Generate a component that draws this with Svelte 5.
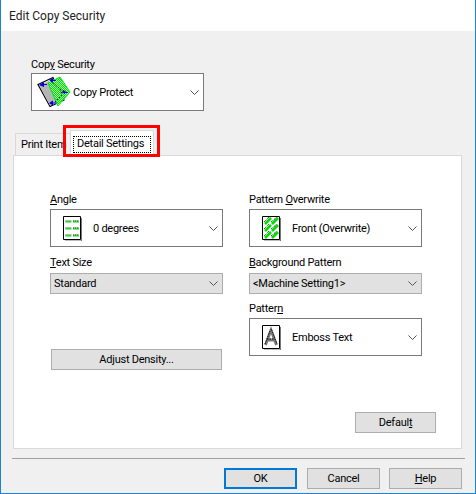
<script>
  const buttons = [
    { label: 'OK', cls: 'btn primary' },
    { label: 'Cancel', cls: 'btn' }
  ];
</script>

{#snippet chev()}
  <svg class="chev" width="9" height="5" viewBox="0 0 9 5"><path d="M.5.5l4 4 4-4" fill="none" stroke="#555"/></svg>
{/snippet}

<div class="window">
  <header class="title">Edit Copy Security</header>
  <main class="body">
    <section class="security">
      <div class="label">Cop<u>y</u> Security</div>
      <div class="combo copy">
        <svg class="ico copyico" width="36" height="34" viewBox="0 0 36 34">
          <defs>
            <pattern id="mesh" width="2" height="2" patternUnits="userSpaceOnUse">
              <rect width="2" height="2" fill="#a8f5a8"/>
              <rect width="1" height="1" fill="#00e600"/>
              <rect x="1" y="1" width="1" height="1" fill="#00e600"/>
            </pattern>
          </defs>
          <path d="M2 9.500 L17 2.500 L28 25 L14 31.500 Z" fill="#fff" stroke="#000" stroke-width="1.200"/>
          <path d="M3 10 L13 6 L21 28 L14 30.500 Z" fill="#b5b5b5"/>
          <path d="M12 8 L24 2 L34 17 L22 31 Z" fill="url(#mesh)" stroke="#00e020" stroke-width="1"/>
          <path d="M15 6 L24 14 L30 17 M24 14 L26 20 L19 27" stroke="#111" stroke-width="1" fill="none" stroke-dasharray="1.500 1.500"/>
          <path d="M3 10 L8 7 L8 12 Z M13 5 L17 3 L17 8 Z M13 28 L17 25.500 L17 30.500 Z M25 17 L29 15.500 L29 19 Z" fill="#0000e0"/>
          <path d="M8 9.500h3M17 5.500h3M17 28h3M29 17.500h3" stroke="#0000e0"/>
        </svg>
        <span class="val first-val">Copy Protect</span>
        {@render chev()}
      </div>
    </section>

    <nav class="tabs">
      <div class="tab">Print Item</div>
      <div class="tab active"><span class="focus">Detail Settings</span></div>
      <div class="highlight"></div>
    </nav>

    <section class="panel">
      <div class="grid">
        <div class="col">
          <div class="label first"><u>A</u>ngle</div>
          <div class="combo">
            <svg class="ico" width="19" height="25" viewBox="0 0 19 25">
              <path d="M.5.500h17v23h-17z" fill="#fff" stroke="#000"/>
              <path d="M18.500 2v23H2" fill="none" stroke="#777"/>
              <path d="M2.500 6h6M10 6h6M2.500 13h6M10 13h6M2.500 20h6M10 20h6" stroke="#00e000" stroke-width="1"/>
              <path d="M2.500 5h6M10 5h6M2.500 12h6M10 12h6M2.500 19h6M10 19h6" stroke="#111" stroke-width="1" stroke-dasharray="1 1"/>
              <path d="M3.500 5h6M11 5h5M3.500 12h6M11 12h5M3.500 19h6M11 19h5" stroke="#00e000" stroke-width="1" stroke-dasharray="1 1"/>
            </svg>
            <span class="val">0 degrees</span>
            {@render chev()}
          </div>
          <div class="label next"><u>T</u>ext Size</div>
          <div class="select">
            <span>Standard</span>
            {@render chev()}
          </div>
          <button class="btn adjust">Ad<u>j</u>ust Density...</button>
        </div>
        <div class="col">
          <div class="label first">Pattern <u>O</u>verwrite</div>
          <div class="combo">
            <svg class="ico" width="19" height="25" viewBox="0 0 19 25">
              <path d="M.500.500h17v23h-17z" fill="#fff" stroke="#000"/>
              <path d="M18.500 2v23H2" fill="none" stroke="#777"/>
              <path d="M3 8l6-6M10 8l6-6M3 15l6-6M10 15l6-6M3 22l6-6M10 22l6-6" stroke="#00dd00" stroke-width="2.600"/>
              <path d="M2 6l5-5M9 6l6-5M2 13l5-5M9 13l6-5M2 20l5-5M9 20l6-5" stroke="#111" stroke-width="1" stroke-dasharray="1 1"/>
            </svg>
            <span class="val">Front (Overwrite)</span>
            {@render chev()}
          </div>
          <div class="label next"><u>B</u>ackground Pattern</div>
          <div class="select">
            <span>&lt;Machine Setting1&gt;</span>
            {@render chev()}
          </div>
          <div class="label third">Patter<u>n</u></div>
          <div class="combo">
            <svg class="ico" width="19" height="25" viewBox="0 0 19 25">
              <path d="M.500.500h17v23h-17z" fill="#fff" stroke="#000"/>
              <path d="M18.500 2v23H2" fill="none" stroke="#777"/>
              <path d="M3.500 20L9 5l5.500 15M5.500 15h7" fill="none" stroke="#777" stroke-width="2.800"/>
              <path d="M3 19L8.500 4.500M9.500 4.500L15 19M5 14h8" fill="none" stroke="#111" stroke-width="1" stroke-dasharray="1.500 1"/>
            </svg>
            <span class="val">Emboss Text</span>
            {@render chev()}
          </div>
        </div>
      </div>
      <div class="panel-foot">
        <button class="btn default">Defaul<u>t</u></button>
      </div>
    </section>

    <hr class="sep" />

    <footer class="actions">
      {#each buttons as b}
        <button class={b.cls}>{b.label}</button>
      {/each}
      <button class="btn"><u>H</u>elp</button>
    </footer>
  </main>
</div>

<style>
  :global(body) { margin: 0; background: #f0f0f0; }
  .window {
    width: 476px; height: 494px; box-sizing: border-box;
    border: 1px solid #1883d7; border-top: 0;
    background: #f0f0f0;
    font: 11px/16px Roboto, "Noto Sans", sans-serif;
    letter-spacing: -0.25px;
    color: #000;
    display: flex; flex-direction: column;
    overflow: hidden;
  }
  .title {
    height: 31px; background: #fff; box-sizing: border-box;
    padding: 8px 0 0 8px; line-height: 16px; color: #222;
    font-size: 12px; letter-spacing: 0;
  }
  .body { flex: 1; padding: 0 0 0 11px; display: flex; flex-direction: column; }
  .security { padding: 26px 0 0 19px; height: 99px; box-sizing: border-box; }
  .label { height: 16px; line-height: 16px; white-space: nowrap; }
  .combo {
    height: 38px; box-sizing: border-box; border: 1px solid #7a7a7a; background: #fff;
    display: flex; align-items: center;
    width: 173px;
  }
  .ico { flex: none; margin-left: 12px; }
  .copyico { margin-left: 4px; }
  .val { margin-left: 11px; padding-top: 1px; white-space: nowrap; }
  .first-val { margin-left: 1px; }
  .chev { margin-left: auto; margin-right: 4px; flex: none; }
  .tabs { height: 25px; position: relative; display: flex; align-items: flex-end; margin-left: 3px; }
  .tab {
    height: 22px; box-sizing: border-box; width: 56px; padding: 3px 0 0 5px;
    background: #f0f0f0; border: 1px solid #d9d9d9; border-bottom: 0;
    white-space: nowrap; overflow: hidden;
  }
  .tab.active {
    width: 84px; margin-left: -1px; background: #fff; padding: 5px 0 0 2px;
    position: relative; z-index: 2; margin-bottom: -1px; height: 26px;
  }
  .focus { display: block; width: 78px; height: 17px; box-sizing: border-box; border: 1px dotted #000; padding-left: 3px; line-height: 13px; }
  .highlight {
    position: absolute; left: 48px; top: -5px; width: 97px; height: 32px;
    box-sizing: border-box; border: 3px solid #f00; z-index: 3;
  }
  .panel {
    width: 449px; height: 294px; box-sizing: border-box; margin-left: 1px;
    background: #fff; border: 1px solid #d9d9d9;
    padding: 36px 0 0 36px;
    display: flex; flex-direction: column;
  }
  .grid { display: grid; grid-template-columns: 172px 173px; column-gap: 27px; height: 220px; }
  .col { display: flex; flex-direction: column; }
  .label.first { height: 17px; }
  .label.next { margin-top: 8px; height: 18px; }
  .label.third { margin-top: 7px; height: 17px; }
  .select {
    height: 21px; box-sizing: border-box; border: 1px solid #adadad; background: #e1e1e1;
    display: flex; align-items: center; padding-left: 3px; white-space: nowrap;
    width: 173px;
  }
  .select span { padding-top: 1px; }
  .btn {
    font: inherit; letter-spacing: inherit; color: #000; padding: 1px 0 0;
    width: 73px; height: 21px; box-sizing: border-box;
    background: #e1e1e1; border: 1px solid #adadad;
  }
  .adjust { width: 171px; margin: 55px 0 0 1px; }
  .panel-foot { display: flex; justify-content: flex-end; padding-right: 25px; }
  .default { width: 81px; }
  .sep { width: 453px; margin: 9px 0 0 0; border: 0; border-top: 1px solid #a0a0a0; height: 1px; }
  .actions { display: flex; gap: 10px; justify-content: flex-end; margin-top: 8px; padding-right: 13px; }
  .actions .btn:nth-child(2) { margin-right: -1px; }
  .primary { border: 2px solid #0078d7; }
  u { text-underline-offset: 1px; }
</style>
